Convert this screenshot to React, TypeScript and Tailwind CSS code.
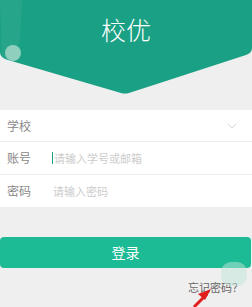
import { ChevronDown } from 'lucide-react';

export default function App() {
  return (
    <div
      className="w-[252px] h-[307px] overflow-hidden bg-[#efefef] relative"
      style={{ fontFamily: '"Noto Sans CJK SC", "Noto Sans", sans-serif' }}
    >
      <div className="relative h-[110px]">
        <svg className="absolute inset-0" width="252" height="110" viewBox="0 0 252 110">
          <path
            d="M0 0 H252 V48 Q252 53 246 55 L129 93 Q125 94 121 93 L8 60 Q0 58 0 52 Z"
            fill="#1aa084"
          />
          <path d="M0 0 H22 L20 40 L14 58 Q6 62 2 56 Z" fill="#ffffff" fillOpacity="0.06" />
          <circle cx="13" cy="53" r="8" fill="#8fcfbe" />
        </svg>
        <div className="relative pt-[12px] text-center text-[25px] leading-[34px] text-white font-light">
          校优
        </div>
      </div>

      <div className="bg-white">
        <div className="flex items-center h-[32px] pl-[7px] pr-[12px] border-b border-[#ececec]">
          <span className="text-[12px] text-[#888]">学校</span>
          <ChevronDown className="ml-auto w-[16px] h-[16px] text-[#d4d4d4]" strokeWidth={1.5} />
        </div>
        <div className="flex items-center h-[33px] pl-[7px] border-b border-[#ececec]">
          <span className="text-[12px] text-[#888] w-[45px]">账号</span>
          <span className="w-[1px] h-[12px] bg-[#1aa084] mr-[1px]" />
          <span className="text-[11px] text-[#cccccc]">请输入学号或邮箱</span>
        </div>
        <div className="flex items-center h-[32px] pl-[7px]">
          <span className="text-[12px] text-[#888] w-[46px]">密码</span>
          <span className="text-[11px] text-[#cccccc]">请输入密码</span>
        </div>
      </div>

      <div className="mt-[30px] h-[31px] w-[251px] rounded-[4px] bg-[#1dbb95] flex items-center justify-center text-white text-[14px]">
        登录
      </div>

      <div className="flex justify-end pr-[9px] pt-[11px]">
        <span className="text-[11px] text-[#666]">忘记密码？</span>
      </div>

      <div className="absolute left-[221px] top-[262px] w-[26px] h-[24px] rounded-[10px] bg-[#bfe6da] opacity-50" />
      <svg className="absolute left-0 top-0" width="252" height="307">
        <path d="M194 307 L207 294" stroke="#e01e1e" strokeWidth="3" />
        <path d="M211 289 L198 294 L205 300 Z" fill="#e01e1e" />
      </svg>
    </div>
  );
}
